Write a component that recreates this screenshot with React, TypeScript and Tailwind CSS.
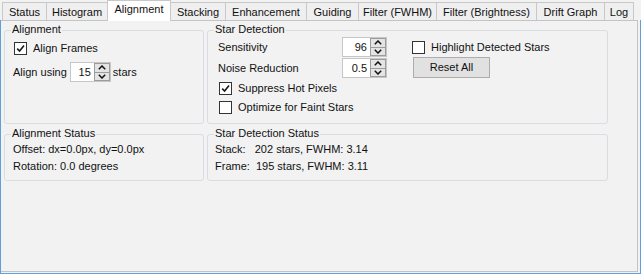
import React from "react";

const tabs: { name: string; w: string; sel?: boolean }[] = [
  { name: "Status", w: "w-[44px]" },
  { name: "Histogram", w: "w-[61px]" },
  { name: "Alignment", w: "w-[64px]", sel: true },
  { name: "Stacking", w: "w-[54px]" },
  { name: "Enhancement", w: "w-[81px]" },
  { name: "Guiding", w: "w-[52px]" },
  { name: "Filter (FWHM)", w: "w-[78px]" },
  { name: "Filter (Brightness)", w: "w-[100px]" },
  { name: "Drift Graph", w: "w-[68px]" },
  { name: "Log", w: "w-[30px]" },
];

function Check({ checked, label }: { checked?: boolean; label: string }) {
  return (
    <div className="flex items-center h-[17px]">
      <span className="w-[13px] h-[13px] border border-[#333333] bg-white flex items-center justify-center shrink-0">
        {checked && (
          <svg width="9" height="9" viewBox="0 0 9 9">
            <path d="M1.2 4.6 L3.6 7.1 L8 1.6" fill="none" stroke="#1a1a1a" strokeWidth="1.6" />
          </svg>
        )}
      </span>
      <span className="ml-[6px] whitespace-nowrap">{label}</span>
    </div>
  );
}

function Spin({ value, w }: { value: string; w: string }) {
  return (
    <div className={`flex h-[20px] border border-[#c6c6c6] bg-white ${w}`}>
      <div className="flex-1 text-right pr-[3px] leading-[18px]">{value}</div>
      <div className="w-[16px] flex flex-col">
        <div className="flex-1 bg-[#e4e4e4] border border-[#9c9c9c] flex items-center justify-center">
          <svg width="8" height="5" viewBox="0 0 8 5">
            <polyline points="0.8,4.2 4,1 7.2,4.2" fill="none" stroke="#111" strokeWidth="1.5" />
          </svg>
        </div>
        <div className="flex-1 bg-[#e4e4e4] border border-t-0 border-[#9c9c9c] flex items-center justify-center">
          <svg width="8" height="5" viewBox="0 0 8 5">
            <polyline points="0.8,0.8 4,4 7.2,0.8" fill="none" stroke="#111" strokeWidth="1.5" />
          </svg>
        </div>
      </div>
    </div>
  );
}

function Group({ title, children, className }: { title: string; children: React.ReactNode; className?: string }) {
  return (
    <div className={`relative border border-[#d8dde2] rounded-[3px] ${className ?? ""}`}>
      <span className="absolute left-[6px] top-[-8px] px-[1px] bg-[#f2f2f2] leading-[13px] whitespace-nowrap">
        {title}
      </span>
      {children}
    </div>
  );
}

export default function App() {
  return (
    <div className="w-[641px] h-[274px] bg-[#f2f2f2] flex flex-col font-['Liberation_Sans',Arial,sans-serif] text-[11px] text-[#111] overflow-hidden">
      <div className="h-[20px] flex items-end pl-[2px] shrink-0">
        {tabs.map((t, i) =>
          t.sel ? (
            <div
              key={t.name}
              className={`${t.w} h-[21px] -mb-[1px] relative z-10 bg-white border border-b-0 border-[#c8c8c8] flex items-center justify-center pb-[3px] whitespace-nowrap`}
            >
              {t.name}
            </div>
          ) : (
            <div
              key={t.name}
              className={`${t.w} h-[18px] bg-[#efefef] border-t border-[#c8c8c8] ${
                i === tabs.length - 1 ? "border-r" : ""
              } ${tabs[i - 1]?.sel ? "" : "border-l"} flex items-center justify-center pt-[1px] whitespace-nowrap`}
            >
              {t.name}
            </div>
          )
        )}
      </div>
      <div className="flex-1 border-l border-r border-b border-[#5ea0dc] flex flex-col">
        <div className="flex-1 border-t border-r border-b border-[#c4c4c4] mr-[2px] mb-[1px] pl-[3px] pt-[9px]">
          <div className="grid grid-cols-[200px_401px] grid-rows-[94px_47px] gap-x-[3px] gap-y-[10px]">
            <Group title="Alignment">
              <div className="pl-[9px] pt-[9px]">
                <Check checked label="Align Frames" />
              </div>
              <div className="flex items-center pl-[8px] mt-[5px]">
                <span className="whitespace-nowrap">Align using</span>
                <div className="ml-[3px]">
                  <Spin value="15" w="w-[41px]" />
                </div>
                <span className="ml-[2px]">stars</span>
              </div>
            </Group>
            <Group title="Star Detection">
              <div className="flex pl-[10px] pt-[6px]">
                <div className="flex flex-col w-[169px]">
                  <div className="flex items-center h-[20px]">
                    <span className="w-[125px]">Sensitivity</span>
                    <Spin value="96" w="w-[45px]" />
                  </div>
                  <div className="flex items-center h-[20px] mt-[1px]">
                    <span className="w-[125px]">Noise Reduction</span>
                    <Spin value="0.5" w="w-[45px]" />
                  </div>
                  <div className="mt-[2px] pl-[1px]">
                    <Check checked label="Suppress Hot Pixels" />
                  </div>
                  <div className="mt-[2px] pl-[1px]">
                    <Check label="Optimize for Faint Stars" />
                  </div>
                </div>
                <div className="flex flex-col ml-[25px] pt-[2px]">
                  <Check label="Highlight Detected Stars" />
                  <button className="mt-[1px] ml-[1px] w-[77px] h-[21px] bg-[#e1e1e1] border border-[#adadad] text-[11px] leading-[19px] text-center">
                    Reset All
                  </button>
                </div>
              </div>
            </Group>
            <Group title="Alignment Status">
              <div className="pl-[8px] pt-[6px] leading-[17px]">
                <div className="whitespace-pre">Offset: dx=0.0px, dy=0.0px</div>
                <div className="whitespace-pre">Rotation: 0.0 degrees</div>
              </div>
            </Group>
            <Group title="Star Detection Status">
              <div className="pl-[7px] pt-[6px] leading-[17px]">
                <div className="whitespace-pre">Stack:   202 stars, FWHM: 3.14</div>
                <div className="whitespace-pre">Frame:  195 stars, FWHM: 3.11</div>
              </div>
            </Group>
          </div>
        </div>
      </div>
    </div>
  );
}
